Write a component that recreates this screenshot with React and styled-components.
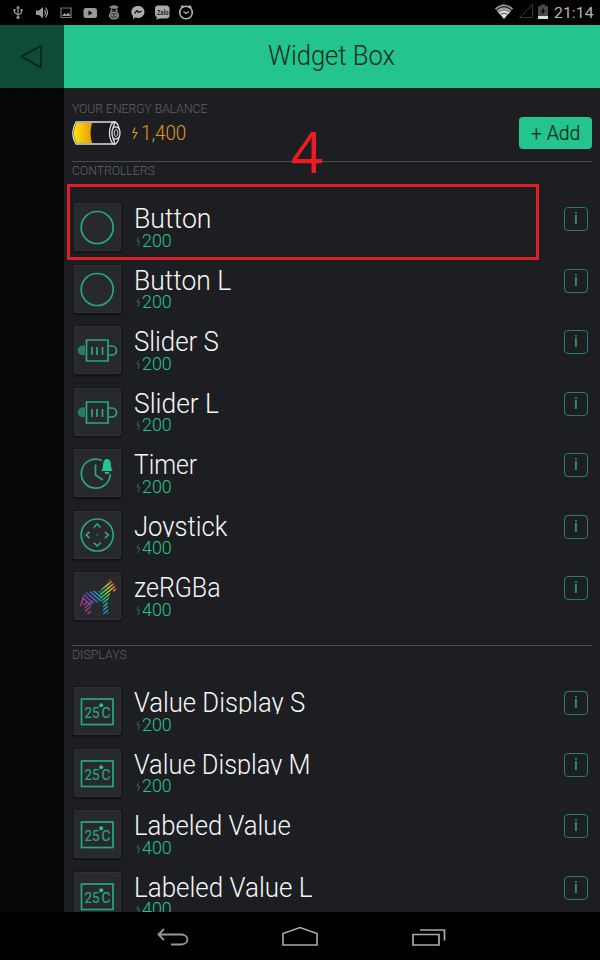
import React, { useLayoutEffect, useRef } from "react";
import styled, { createGlobalStyle } from "styled-components";

const GREEN = "#24c48e";
const LINE = "#2aa67f";

const Global = createGlobalStyle`
  * { box-sizing: border-box; }
  html, body { margin: 0; background: #000; }
  body { width: 600px; height: 960px; overflow: hidden; font-family: Roboto, "Liberation Sans", sans-serif; }
  svg { display: block; flex: none; }
`;

const Screen = styled.div`
  position: relative;
  width: 600px;
  height: 960px;
  display: grid;
  grid-template-rows: 25px 63px minmax(0, 1fr) 48px;
  background: #000;
  overflow: hidden;
`;
const StatusBar = styled.div`
  display: flex;
  justify-content: space-between;
  background: #000;
`;
const Clock = styled.span`
  width: 40px;
  font-size: 15.5px;
  line-height: 27px;
  color: #b4b4b4;
  white-space: nowrap;
`;
const StatusRight = styled.div`
  display: flex;
  width: 106px;
`;
const Header = styled.header`
  display: grid;
  grid-template-columns: 64px 1fr;
  background: ${GREEN};
`;
const BackButton = styled.div`
  background: #0f4c38;
  display: flex;
`;
const HeaderTitle = styled.h1`
  margin: 0;
  padding-left: 204px;
  font-weight: 300;
  font-size: 27px;
  line-height: 63px;
  color: #072d20;
`;
const Main = styled.main`
  display: grid;
  grid-template-columns: 64px 1fr;
  min-height: 0;
`;
const Shade = styled.div`
  background-color: #060607;
  background-image: radial-gradient(circle, #0e0e10 0.8px, transparent 1px);
  background-size: 12px 12px;
  border-top: 2px solid #030605;
  border-right: 1px solid #020203;
`;
const Panel = styled.section`
  overflow: hidden;
  padding: 0 8px;
  background: #1d1e22;
  border-top: 2px solid #12241f;
`;
const Balance = styled.div`
  display: grid;
  grid-template-columns: 1fr 73px;
  height: 71px;
`;
const BalanceInfo = styled.div`
  padding-top: 11px;
`;
const Caption = styled.div`
  height: 16px;
  font-size: 13.5px;
  font-weight: 300;
  line-height: 15px;
  color: #626367;
`;
const Amount = styled.div`
  display: flex;
  align-items: center;
  margin-top: 2px;
  height: 28px;
  color: #e39a13;
  font-size: 20px;
  font-weight: 300;
`;
const AddButton = styled.div`
  margin-top: 27px;
  height: 32px;
  border-radius: 4px;
  background: ${GREEN};
  color: #042a1c;
  font-size: 21px;
  font-weight: 300;
  -webkit-text-stroke: 0.2px #042a1c;
  line-height: 32px;
  padding-left: 12px;
`;
const Group = styled.div`
  border-top: 1px solid #494a4e;
  height: ${(p) => p.$height}px;
`;
const GroupCaption = styled(Caption)`
  height: 41px;
  line-height: 16.5px;
`;
const Row = styled.div`
  display: grid;
  grid-template-columns: 50px 1fr 24px;
  column-gap: 12px;
  height: 61.5px;
  padding-right: 4px;
`;
const Tile = styled.div`
  margin-left: 1px;
  width: 48px;
  height: 48px;
  background: #27292d;
  border: 1px solid #2e3035;
  border-left-color: #222327;
  border-radius: 2px;
  box-shadow: 0 2px 2px #121316, 0 0 1px 1px #17181b;
  svg { margin: -1px; }
`;
const Title = styled.div`
  height: 26.5px;
  padding-top: 5px;
  overflow: hidden;
  color: #f6f6f7;
  font-size: 27px;
  font-weight: 300;
  line-height: 22px;
`;
const Price = styled.div`
  display: flex;
  height: 22px;
  color: ${GREEN};
  font-size: 18.5px;
  font-weight: 300;
  line-height: 22.5px;
`;
const InfoButton = styled.div`
  margin-top: 4px;
  width: 24px;
  height: 24px;
  border: 1.5px solid #277e65;
  border-radius: 4px;
  color: #32a383;
  font-size: 16px;
  line-height: 22px;
  text-align: center;
`;
const Fitted = styled.span`
  display: inline-block;
  white-space: pre;
  transform-origin: 0 50%;
`;
const NavBar = styled.nav`
  display: flex;
  justify-content: center;
  gap: 88px;
  background: #000;
`;
const Highlight = styled.div`
  position: absolute;
  left: 67px;
  top: 184px;
  width: 472px;
  height: 76px;
  border: 3px solid #dc202b;
`;
const StepNumber = styled.div`
  position: absolute;
  left: 291px;
  top: 111px;
  font: 400 56px/80px "Open Sans", sans-serif;
  color: #ed1c24;
`;

// Condenses or widens a text run so that it takes up exactly the given width.
function Fit({ width, children }) {
  const ref = useRef(null);
  useLayoutEffect(() => {
    const el = ref.current;
    el.style.transform = `scaleX(${width / el.offsetWidth})`;
  }, [width, children]);
  return <Fitted ref={ref}>{children}</Fitted>;
}

const CircleIcon = () => <circle cx="24.2" cy="24.5" r="16" />;

const SliderIcon = () => (
  <>
    <path d="M12 19.5H9.500a4.800 4.800 0 0 0 0 9.600H12z" fill="#24805f" stroke="none" />
    <path d="M35.500 20H39a4.300 4.300 0 0 1 0 9h-3.500" />
    <path d="M13.500 14h21.500v21H13.500zM19 21v8M24 21v8M29.500 21v8" />
  </>
);
const TimerIcon = () => (
  <>
    <path d="M29 11.500A14.500 14.500 0 1 0 37.300 25M22.500 15.500v10.500l7.500 5" />
    <path d="M28 22c2-1 1.800-5 2.300-8 .5-2.500 2-4 3.700-4s3.200 1.500 3.700 4c.5 3 .3 7 2.300 8zM31.500 23h5a2.500 2 0 0 1-5 0z" fill={GREEN} stroke="none" />
  </>
);
const JoystickIcon = () => (
  <>
    <circle cx="24.200" cy="24" r="16" />
    <path d="m20.800 16.500 3.400-3.500 3.400 3.500M20.800 31.500l3.400 3.500 3.400-3.500M16.500 20.800 13.200 24l3.300 3.200M32 20.800l3.300 3.200-3.300 3.200" />
    <circle cx="24.200" cy="24" r=".8" fill={LINE} stroke="none" />
  </>
);
const ZebraIcon = () => (
  <>
    <defs>
      <linearGradient id="rainbow" gradientUnits="userSpaceOnUse" x1="6" y1="34" x2="43" y2="14">
        <stop offset="0" stopColor="#d52a4c" />
        <stop offset=".14" stopColor="#a43a98" />
        <stop offset=".32" stopColor="#6750b4" />
        <stop offset=".46" stopColor="#1f95cd" />
        <stop offset=".64" stopColor="#24bf73" />
        <stop offset=".82" stopColor="#c3cf2f" />
        <stop offset=".92" stopColor="#e49a25" />
        <stop offset="1" stopColor="#dd3035" />
      </linearGradient>
      <clipPath id="frontHalf"><path d="M27 19 35 9.500l3-2.500 1.500 3 3 4 1 4-2 2-3.500-2-2 7-1.500 7 1 10h-6l1-6-1-6-3-5 1-3z" /></clipPath>
      <clipPath id="rearHalf"><path d="M9 24 13 20.500l7-1.500h6l3 4-1 7-8 1-2.500 4 1 7h-6l-1-7-2-4z" /></clipPath>
    </defs>
    <g stroke="url(#rainbow)" strokeWidth="1.400">
      <g clipPath="url(#frontHalf)">
        <path d="M20 21 46 0M20 24.500 48 2M21 27.500 49 5M22 30.500 49 8.500M24 32.500 49 12M25 35 49 15.500M26 38 49 19.500M26 41.500 49 23M27 44.500 49 27M31 45 49 30.500" />
      </g>
      <g clipPath="url(#rearHalf)">
        <path d="M20 14 34 26M15 14 34 30.500M11 14.500 32 32.500M8 16 30 35M6 18.500 26 36M5 22 22 36.500M8 35.500 14 30M8 39 20 29M9 42 22 31M12 44 24 34M16 45 24 38" />
      </g>
      <path d="M7.500 34 10.500 25" />
    </g>
  </>
);
const DisplayIcon = () => (
  <>
    <rect x="8.500" y="12" width="31.500" height="25.500" />
    <g fill={LINE} stroke={LINE} strokeWidth=".2" fontFamily="Roboto, sans-serif" fontSize="15.500">
      <text x="11.500" y="31" textLength="15" lengthAdjust="spacingAndGlyphs">25</text>
      <text x="28.500" y="31" textLength="9" lengthAdjust="spacingAndGlyphs">C</text>
    </g>
    <circle cx="28.200" cy="18.300" r="2" fill={GREEN} stroke="none" />
  </>
);

const controllers = [
  ["Button", 77, "200", CircleIcon],
  ["Button L", 97, "200", CircleIcon],
  ["Slider S", 85, "200", SliderIcon],
  ["Slider L", 85, "200", SliderIcon],
  ["Timer", 63, "200", TimerIcon],
  ["Joystick", 93, "400", JoystickIcon],
  ["zeRGBa", 87, "400", ZebraIcon],
];
const displays = [
  ["Value Display S", 171, "200", DisplayIcon],
  ["Value Display M", 177, "200", DisplayIcon],
  ["Labeled Value", 157, "400", DisplayIcon],
  ["Labeled Value L", 178, "400", DisplayIcon],
];

function WidgetRow({ item: [name, width, price, Icon] }) {
  return (
    <Row>
      <Tile>
        <svg width="48" height="48" viewBox="0 0 48 48" fill="none" stroke={LINE} strokeWidth="1.700"><Icon /></svg>
      </Tile>
      <div>
        <Title><Fit width={width}>{name}</Fit></Title>
        <Price>
          <svg width="7.500" height="22" viewBox="0 0 7.500 22" fill="none" stroke="#35705f" strokeWidth=".9">
            <path d="M4.500 7.500 3 11h2.500L4 16" />
          </svg>
          <Fit width={30}>{price}</Fit>
        </Price>
      </div>
      <InfoButton>i</InfoButton>
    </Row>
  );
}

const StatusIcons = () => (
  <svg width="210" height="25" viewBox="0 0 210 25" fill="none" stroke="#999" strokeWidth="1.200">
    <path d="M18 8v9M14.500 10v2.500l3.500 2.500 3.500-2V10" />
    <path d="m18 5.500 2 3h-4zM13.500 9h2v2h-2zM20.500 9h2v2h-2z" fill="#999" stroke="none" />
    <circle cx="18" cy="17.500" r="1.600" fill="#999" stroke="none" />
    <path d="M36 10.500h3l4-3.500v11.500l-4-3.500h-3z" fill="#999" stroke="none" />
    <path d="M44.500 10q2 2.500 0 5.500M45.500 7.500q4 5 0 10" />
    <path d="M61 8h10v9.500H61z" stroke="#777" />
    <path d="m62 16 2.500-3 2 1.500 2-2 2 3.500z" fill="#999" stroke="none" />
    <rect x="83.500" y="8" width="13.500" height="10" rx="2.500" fill="#999" stroke="none" />
    <path d="m88.500 10.500 4 2.500-4 2.500z" fill="#080808" stroke="none" />
    <path d="m108.500 7 5.500-2 5.500 2-5.500 2z" fill="#888" stroke="none" />
    <circle cx="114" cy="10.500" r="3" stroke="#888" />
    <ellipse cx="114" cy="15.500" rx="4.500" ry="3.500" fill="#555" stroke="#999" />
    <path d="M112.500 10.500h.8M115 10.500h.8M111.500 15.500h1.500M115 15.500h1.500" />
    <path d="M138 6c4 0 6.500 2.700 6.500 6s-2.700 6-6.500 6c-1 0-1.800-.2-2.600-.5L133 19v-3c-1-1-1.700-2.400-1.700-4 0-3.300 2.700-6 6.700-6z" fill="#aaa" stroke="none" />
    <path d="m134.500 13.500 2.600-2.800 2 1.800 2.500-1.500" stroke="#111" />
    <path d="M158 5.500h8q3.500 0 3.500 3.500v6q0 3.500-3.500 3.500h-6l-4 1 1-2q-2-1-2-3.500V9q0-3.500 3-3.500z" fill="#aaa" stroke="none" />
    <text x="157" y="14.500" fill="#222" stroke="none" fontFamily="Roboto" fontWeight="700" fontSize="6.500" textLength="11.500" lengthAdjust="spacingAndGlyphs">Zalo</text>
    <circle cx="186" cy="12.500" r="6.300" strokeWidth="1.500" stroke="#bbb" />
    <path d="m183.500 11.500 2.500 2 3-2M181 7l2-1.500M189 5.500l2.500 2" stroke="#bbb" />
  </svg>
);
const SignalIcons = () => (
  <svg width="60" height="25" viewBox="0 0 60 25" fill="none">
    <path d="M0.500 8.500Q10-.5 19.500 8.500L10 19z" fill="#343434" />
    <path d="M3.500 11.500Q10 5.500 16.500 11.500L10 19z" fill="#ddd" />
    <path d="M1.500 9Q10 1.500 18.500 9M3.200 11Q10 5 16.800 11" stroke="#aaa" strokeWidth="1.100" />
    <path d="M4.500 12.200Q10 7.500 15.500 12.200M6.500 14.500Q10 11.500 13.500 14.500" stroke="#222" strokeWidth=".8" />
    <path d="M25.500 17.500h13V4.500z" stroke="#383838" />
    <path d="M44 6h3V4.500h4V6h3v13H44z" fill="#4a4a4a" />
    <path d="M44 16h10v3H44z" fill="#ddd" />
    <path d="m50 7.500-3.500 4.500h2l-1 3.500 4-5h-2z" fill="#080808" />
  </svg>
);

export default function App() {
  return (
    <Screen>
      <Global />
      <StatusBar>
        <StatusIcons />
        <StatusRight>
          <SignalIcons />
          <Clock><Fit width={40}>21:14</Fit></Clock>
        </StatusRight>
      </StatusBar>
      <Header>
        <BackButton>
          <svg width="64" height="63" viewBox="0 0 64 63" fill="none" stroke="#06231a" strokeWidth="1.600">
            <path d="M21.500 31.500 40.800 21v21.500z" />
          </svg>
        </BackButton>
        <HeaderTitle><Fit width={127}>Widget Box</Fit></HeaderTitle>
      </Header>
      <Main>
        <Shade />
        <Panel>
          <Balance>
            <BalanceInfo>
              <Caption><Fit width={135}>YOUR ENERGY BALANCE</Fit></Caption>
              <Amount>
                <svg width="69" height="28" viewBox="0 0 69 28" fill="none">
                  <defs>
                    <linearGradient id="charge" x1="0" y1="0" x2="1" y2="0">
                      <stop offset="0" stopColor="#ffe500" /><stop offset="1" stopColor="#e89b09" />
                    </linearGradient>
                  </defs>
                  <path d="M4 3h39Q38 14 43 25H4Q-2.500 14 4 3z" fill="#1a1b1f" stroke="#ddd" strokeWidth="1.300" />
                  <path d="M4.500 4H20q-3 10 0 20H4.500Q-1 14 4.500 4z" fill="url(#charge)" />
                  <ellipse cx="42.500" cy="14" rx="5" ry="11" stroke="#ddd" strokeWidth="1.300" />
                  <path d="M42.500 8q5.500-.5 5.500 6t-5.500 6q-2.500-1-2.500-6t2.500-6z" fill="#25262b" stroke="#ddd" strokeWidth="1.300" />
                  <ellipse cx="44" cy="14" rx="1.800" ry="3.500" stroke="#bbb" />
                  <path d="m63 8.500-2 5h4L61.500 20" stroke="#e39a13" strokeWidth="1.100" />
                </svg>
                <Fit width={45}>1,400</Fit>
              </Amount>
            </BalanceInfo>
            <AddButton><Fit width={49}>+ Add</Fit></AddButton>
          </Balance>
          <Group $height={484}>
            <GroupCaption><Fit width={83}>CONTROLLERS</Fit></GroupCaption>
            {controllers.map((item) => <WidgetRow key={item[0]} item={item} />)}
          </Group>
          <Group $height={300}>
            <GroupCaption><Fit width={55}>DISPLAYS</Fit></GroupCaption>
            {displays.map((item) => <WidgetRow key={item[0]} item={item} />)}
          </Group>
        </Panel>
      </Main>
      <NavBar>
        <svg width="40" height="48" viewBox="0 0 40 48" fill="none" stroke="#999" strokeWidth="1.800">
          <path d="m12 17-5.500 5.500L12 28M6.500 22.500H29c8.500 0 8.500 10 0 10H19" />
        </svg>
        <svg width="40" height="48" viewBox="0 0 40 48" fill="none" stroke="#aaa" strokeWidth="1.600">
          <path d="M3 33V21.500l17-6 17 6V33z" />
        </svg>
        <svg width="40" height="48" viewBox="0 0 40 48" fill="none" stroke="#aaa" strokeWidth="1.700">
          <path d="M5 22.500h26V33H5zM12 18h24.500v10.500" />
        </svg>
      </NavBar>
      <Highlight />
      <StepNumber>4</StepNumber>
    </Screen>
  );
}
